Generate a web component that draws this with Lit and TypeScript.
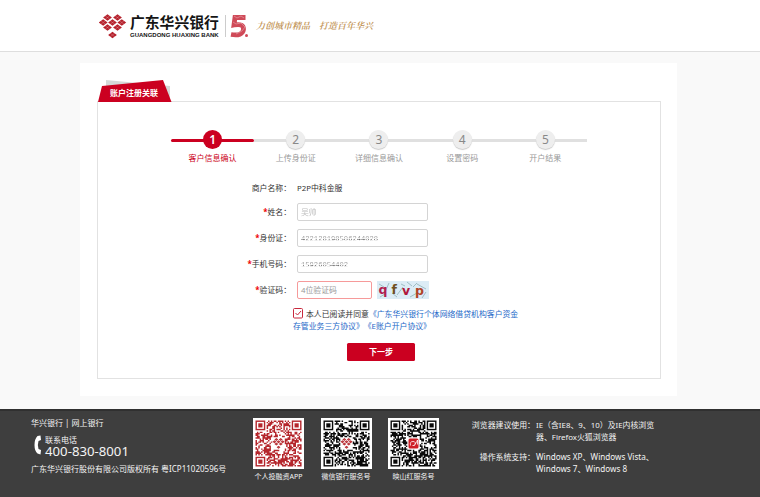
import { LitElement, html, svg, css } from "lit";
import { customElement, property } from "lit/decorators.js";

const MARK: [number, number][] = [
  [8.5, 3.5], [18.5, 3.5],
  [4.2, 8.5], [13.5, 8.5], [22.8, 8.5],
  [8.5, 13.5], [18.5, 13.5],
  [13.5, 21],
];

/* The bank mark: a heart of diamonds, each split in four by a light cross. */
const markTiles = (fill: string) => MARK.map(([x, y]) => svg`
  <path d="M${x} ${y - 3.3}L${x + 4.4} ${y}L${x} ${y + 3.3}L${x - 4.4} ${y}Z" fill=${fill}></path>
  <path d="M${x - 2.4} ${y - 1.8}L${x + 2.4} ${y + 1.8}M${x + 2.4} ${y - 1.8}L${x - 2.4} ${y + 1.8}" stroke="#fff" stroke-opacity=".4" stroke-width=".5"></path>`);

@customElement("qr-code")
class QrCode extends LitElement {
  @property() color = "#0a0a0a";
  @property({ type: Number }) seed = 1;
  @property() badge = "mark";
  static styles = css`
    :host { display: block; width: 51px; height: 51px; background: #fff; }
    svg { display: block; }
  `;
  render() {
    const n = 33;
    let s = this.seed * 7919;
    const rnd = () => ((s = (s * 1103515245 + 12345) % 2147483648) / 2147483648);
    let d = "";
    for (let y = 0; y < n; y++) {
      for (let x = 0; x < n; x++) {
        const on = rnd() < 0.55;
        const corner = (x < 8 && y < 8) || (x > n - 9 && y < 8) || (x < 8 && y > n - 9);
        const mid = Math.abs(x - 16) < 5 && Math.abs(y - 16) < 5;
        if (on && !corner && !mid) d += `M${x} ${y}h1.05v1.05h-1.05z`;
      }
    }
    const eye = (x: number, y: number) => svg`
      <rect x=${x + 0.5} y=${y + 0.5} width="6" height="6" fill="none" stroke=${this.color}></rect>
      <rect x=${x + 2} y=${y + 2} width="3" height="3" fill=${this.color}></rect>`;
    return html`<svg width="51" height="51" viewBox="0 0 51 51">
      <g transform="translate(2.5 2.5) scale(1.394)">
        <path d=${d} fill=${this.color}></path>
        ${eye(0, 0)}${eye(n - 7, 0)}${eye(0, n - 7)}
      </g>
      ${this.badge === "mark"
        ? svg`<g transform="translate(19.6 20) scale(.44)">${markTiles("#b5262c")}</g>`
        : svg`<rect x="20.5" y="20.5" width="10" height="10" rx="1.5" fill="#cf2027"></rect>
            <path d="M22.5 27.5q-1-4 2.500-4t1.500 4h-2m2.500-1q2-3.500 2.500-4.500v4.500" fill="none" stroke="#fff" stroke-width=".8"></path>`}
    </svg>`;
  }
}

const STEPS = ["客户信息确认", "上传身份证", "详细信息确认", "设置密码", "开户结果"];

@customElement("app-root")
class AppRoot extends LitElement {
  static styles = css`
    :host {
      display: flex; flex-direction: column; width: 760px; height: 497px; overflow: hidden;
      background: #f9f9f9; color: #333; white-space: nowrap; text-spacing-trim: space-all;
      font: 7.87px/12px "Noto Sans", "Noto Sans CJK SC", sans-serif;
    }
    * { box-sizing: border-box; }
    svg { display: block; }
    header {
      display: flex; flex: none; height: 52px; padding: 14px 0 0 99px;
      background: #fff; border-bottom: 1px solid #dedede;
    }
    .brand { width: 89px; margin-left: 3px; color: #151515; }
    .cn { font: 700 14.8px/16px "Noto Sans CJK SC", sans-serif; }
    .en { font: 700 6px/8px "Liberation Sans", sans-serif; margin-top: 1px; }
    .rule { width: 1px; height: 22px; margin: 1px 4px 0 6px; background: #ccc; }
    .slogan {
      display: flex; gap: 9px; margin: 4px 0 0 7px; color: #c0904f;
      font: italic 600 9px/15px "Noto Serif CJK SC", "Noto Sans CJK SC", serif;
    }
    main { flex: none; width: 597px; height: 333px; margin: 11px 0 0 80px; padding: 17px 16px 0 17px; background: #fff; }
    .tab { display: grid; width: 75px; height: 22px; }
    .tab > * { grid-area: 1 / 1; }
    .tab span { color: #fff; font-weight: 700; font-size: 8px; padding: 7px 0 0 13px; }
    .panel { height: 278px; width: 564px; margin-top: -1px; border: 1px solid #e2e2e2; padding: 28px 0 0 73px; }
    .steps { display: grid; grid-template-columns: repeat(5, 83.2px); width: 417px; }
    .step { display: grid; grid-template-rows: 20px 15px; justify-items: center; color: #999; font-size: 8px; }
    .line { grid-area: 1 / 1; align-self: center; width: 100%; height: 3px; background: #e0e0e0; }
    .dot {
      grid-area: 1 / 1; width: 19px; height: 19px; border-radius: 50%; background: #eee;
      box-shadow: 0 1px 1px #ccc; color: #888; text-align: center; font-size: 12px; line-height: 19px;
    }
    .step p { margin: 2px 0 0; }
    .active { color: #cb0020; }
    .active .line { background: #cb0020; border-radius: 2px; }
    .active .dot { background: #cb0020; color: #fff; font-weight: 600; box-shadow: none; }
    form { margin: 12px 0 0 67px; width: 300px; }
    .row { display: grid; grid-template-columns: 53px 1fr; column-gap: 6px; height: 26px; align-items: center; }
    .row.first { height: 22px; }
    .row label { text-align: right; }
    .row i { color: #e00; font-style: normal; font-weight: 700; }
    .field {
      width: 131px; height: 18px; border: 1px solid #d4d4d4; border-radius: 2px;
      padding: 0 3px; line-height: 16px; color: #999;
    }
    .masked span { opacity: .65; }
    .num span {
      font: 7.15px/16px "Liberation Mono", monospace; opacity: 1; color: transparent;
      background: linear-gradient(#999 0 3px, #ddd 3px 4px, #444 4px 5px, #ddd 5px 6px, #777 6px) 0 0;
      -webkit-background-clip: text; background-clip: text;
    }
    .code { display: flex; gap: 5px; }
    .error { width: 75px; border-color: #f69a9a; }
    .captcha { width: 52px; height: 18px; }
    .captcha text { font: 700 12.5px "DejaVu Sans", sans-serif; }
    .agree { display: grid; grid-template-columns: 10px 1fr; column-gap: 3px; margin: 5px 0 0 55px; line-height: 12px; width: 240px; }
    .agree .more { grid-column: 1 / 3; }
    .link { color: #2468c8; }
    button {
      display: block; width: 68px; height: 18px; margin: 11px 0 0 109px; border: 0; border-radius: 1.5px;
      background: #cb0020; color: #fff; font: 600 8px/18px "Noto Sans CJK SC", sans-serif; padding: 0;
    }
    footer {
      flex: none; display: flex; height: 88px; margin-top: 13px; padding-left: 31px; font-size: 8px;
      background: #3e3e3e; border-top: 2px solid #303030; color: #f4f4f4;
    }
    .contact { width: 222px; padding-top: 6px; }
    .phone { display: flex; gap: 3px; margin: 6px 0 5px 3px; height: 23px; }
    .phone b { display: block; font-weight: 400; font-size: 13.2px; line-height: 13px; }
    .phone span { display: block; line-height: 10px; }
    .codes { display: flex; gap: 16.5px; padding-top: 7px; width: 220px; }
    .codes figure { margin: 0; width: 51px; display: flex; flex-direction: column; align-items: center; font-size: 7px; gap: 2px; }
    .support { display: grid; grid-template-columns: 62px auto; align-content: start; gap: 8px 1px; margin: 0; padding-top: 8px; font-size: 7.9px; }
    .support dt { text-align: right; justify-self: end; }
    .support dd { margin: 0; }
    .support .os { font-size: 8.15px; }
  `;

  render() {
    return html`
      <header>
        <svg width="28" height="26" viewBox="0 0 28 26">${markTiles("#b5202b")}</svg>
        <div class="brand"><div class="cn">广东华兴银行</div><div class="en">GUANGDONG HUAXING BANK</div></div>
        <div class="rule"></div>
        <svg width="19" height="25" viewBox="0 0 19 25">
          <path d="M15.500 3.500H5L4 11Q13.800 9 13.500 15.500Q12.500 22.500 1 20.500" fill="none" stroke="#cf4a58" stroke-width="4.800"></path>
          <path d="M4 2l3 2 4-2 3 2M3 8l3 2 5-1 4 4-3 4-6 3" fill="none" stroke="#e9a4ac" stroke-width=".6"></path>
          <circle cx="16.500" cy="21.500" r="1.500" fill="#cf4a58"></circle>
        </svg>
        <div class="slogan"><span>力创城市精品</span><span>打造百年华兴</span></div>
      </header>
      <main>
        <div class="tab">
          <svg width="75" height="22" viewBox="0 0 75 22">
            <path d="M9 0L73 6V22H9Z" fill="#d5d9d8"></path>
            <path d="M5 6L66 0L74.500 22H1Z" fill="#cb0020"></path>
          </svg>
          <span>账户注册关联</span>
        </div>
        <section class="panel">
          <div class="steps">
            ${STEPS.map((label, i) => html`<div class="step ${i === 0 ? "active" : ""}">
              <div class="line"></div><div class="dot">${i + 1}</div><p>${label}</p></div>`)}
          </div>
          <form>
            <div class="row first"><label>商户名称：</label><span>P2P中科金服</span></div>
            <div class="row"><label><i>*</i>姓名：</label><div class="field masked"><span>吴帅</span></div></div>
            <div class="row"><label><i>*</i>身份证：</label><div class="field masked num"><span>422128198506244028</span></div></div>
            <div class="row"><label><i>*</i>手机号码：</label><div class="field masked num"><span>15926054402</span></div></div>
            <div class="row"><label><i>*</i>验证码：</label>
              <div class="code">
                <div class="field error">4位验证码</div>
                <svg class="captcha" viewBox="0 0 52 18">
                  <rect width="52" height="18" fill="#dcecf6"></rect>
                  <path d="M2 3l5 3M12 2l-4 9M20 14l6-8M30 1l5 4M40 3l9 5M3 16l5-3M15 12l5 4M33 16l7-4M45 17l4-6M24 3l4 2M36 6l4-4" stroke="#84a9ad" stroke-width=".7"></path>
                  <text x="1.500" y="13" fill="#b02050">q</text><text x="14.500" y="13" fill="#705020">f</text>
                  <text x="25" y="14" fill="#b0183c">v</text><text x="38" y="14" fill="#b04428">p</text>
                </svg>
              </div>
            </div>
            <div class="agree">
              <svg width="10" height="11" viewBox="0 0 10 11">
                <rect x=".5" y=".5" width="9" height="9.500" rx="1" fill="#fff" stroke="#c8283c"></rect>
                <path d="M2.500 5l2 2 3.500-4" fill="none" stroke="#c8283c"></path>
              </svg>
              <span>本人已阅读并同意<span class="link">《广东华兴银行个体网络借贷机构客户资金</span></span>
              <span class="more link">存管业务三方协议》《E账户开户协议》</span>
            </div>
            <button type="button">下一步</button>
          </form>
        </section>
      </main>
      <footer>
        <div class="contact">
          <div>华兴银行 | 网上银行</div>
          <div class="phone">
            <svg width="8" height="20" viewBox="0 0 8 20">
              <path d="M6.500 .5L3.500 1Q.5 4 .5 10T3.500 18.500L6.500 19.500L7 15L4.500 14Q3.200 10 4.500 6L7 5Z" fill="#fff"></path>
            </svg>
            <div><span>联系电话</span><b>400-830-8001</b></div>
          </div>
          <div>广东华兴银行股份有限公司版权所有 粤ICP11020596号</div>
        </div>
        <div class="codes">
          <figure><qr-code color="#b5262c" seed="3"></qr-code>个人投融资APP</figure>
          <figure><qr-code seed="5"></qr-code>微信银行服务号</figure>
          <figure><qr-code seed="8" badge="seal"></qr-code>映山红服务号</figure>
        </div>
        <dl class="support">
          <dt>浏览器建议使用：</dt><dd>IE（含IE8、9、10）及IE内核浏览<br>器、Firefox火狐浏览器</dd>
          <dt>操作系统支持：</dt><dd class="os">Windows XP、Windows Vista、<br>Windows 7、Windows 8</dd>
        </dl>
      </footer>
    `;
  }
}
